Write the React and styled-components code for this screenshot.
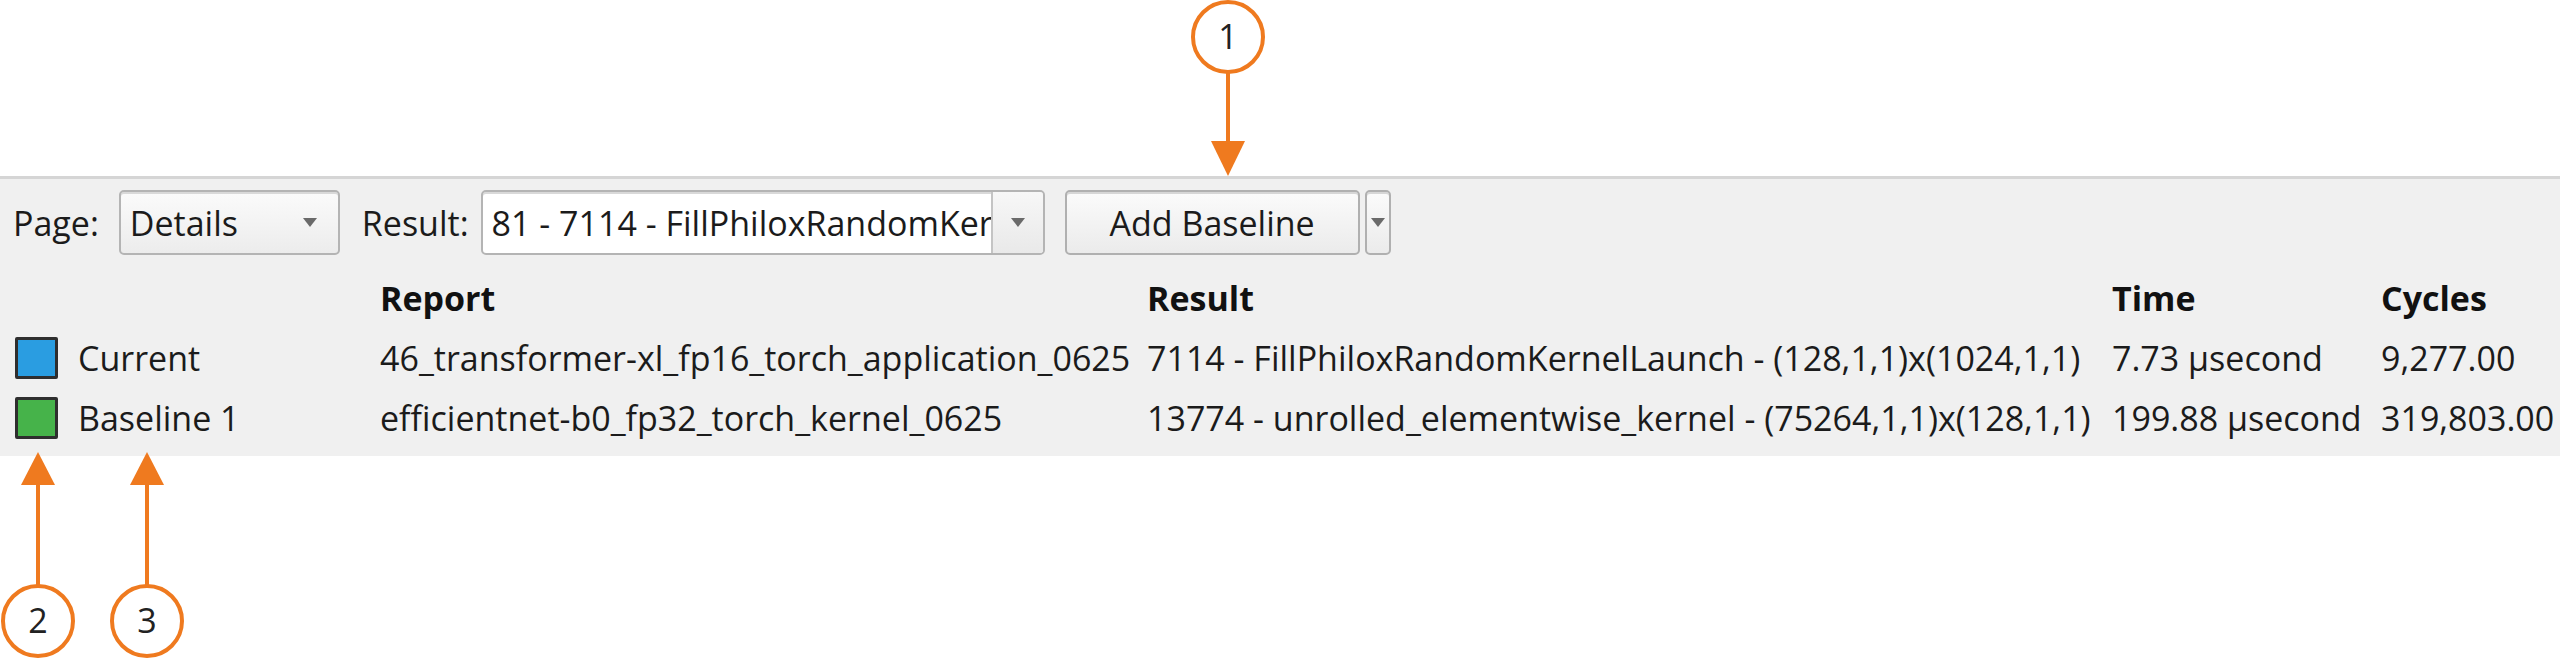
import React from "react";
import styled, { createGlobalStyle } from "styled-components";

const Global = createGlobalStyle`
  html, body { margin: 0; padding: 0; background: #ffffff; }
  body { font-family: "Open Sans", "Noto Sans", sans-serif; color: #1b1b1b; }
`;

const Page = styled.div`
  position: relative;
  width: 2560px;
  height: 668px;
  overflow: hidden;
  background: #ffffff;
`;

const TopSpace = styled.div`
  height: 176px;
`;

const Panel = styled.section`
  box-sizing: border-box;
  height: 280px;
  background: #f0f0f0;
  border-top: 3px solid #d5d5d5;
`;

const Toolbar = styled.div`
  display: flex;
  align-items: center;
  height: 65px;
  margin-top: 11px;
  padding-left: 13px;
  font-size: 34px;
`;

const Label = styled.span`
  margin-right: ${(p) => p.$gap}px;
  white-space: nowrap;
`;

const Combo = styled.div`
  display: flex;
  align-items: stretch;
  box-sizing: border-box;
  flex: none;
  width: ${(p) => p.$w}px;
  height: 65px;
  margin-right: ${(p) => p.$gap}px;
  border: 2px solid #b4b4b4;
  border-radius: 5px;
  background: ${(p) => (p.$editable ? "#ffffff" : "linear-gradient(#fbfbfb, #ececec)")};
  box-shadow: inset 0 2px 0 #d9d9d9;
  overflow: hidden;
`;

const ComboText = styled.span`
  flex: 1;
  min-width: 0;
  display: flex;
  align-items: center;
  padding-left: 9px;
  white-space: nowrap;
  overflow: hidden;
`;

const ComboArrow = styled.span`
  flex: none;
  display: flex;
  align-items: center;
  justify-content: center;
  width: ${(p) => p.$w}px;
  background: ${(p) => (p.$split ? "linear-gradient(#f7f7f7, #e9e9e9)" : "transparent")};
  border-left: ${(p) => (p.$split ? "2px solid #c4c4c4" : "none")};
`;

const Caret = styled.span`
  width: 0;
  height: 0;
  border-left: 7px solid transparent;
  border-right: 7px solid transparent;
  border-top: 9px solid #6a6a6a;
`;

const Button = styled.button`
  box-sizing: border-box;
  flex: none;
  width: ${(p) => p.$w}px;
  height: 65px;
  margin-right: ${(p) => p.$gap || 0}px;
  padding: 0;
  display: flex;
  align-items: center;
  justify-content: center;
  border: 2px solid #b0b0b0;
  border-radius: 5px;
  background: linear-gradient(#fbfbfb, #ebebeb);
  box-shadow: inset 0 2px 0 #d6d6d6;
  font-family: inherit;
  font-size: 34px;
  color: #1b1b1b;
`;

const Table = styled.div`
  display: grid;
  grid-template-columns: 63px 302px 767px 965px 269px auto;
  grid-auto-rows: 60px;
  margin-top: 13px;
  padding-left: 15px;
  font-size: 34px;
`;

const Cell = styled.div`
  display: flex;
  align-items: center;
  white-space: nowrap;
  font-weight: ${(p) => (p.$head ? 700 : 400)};
  color: ${(p) => (p.$head ? "#111" : "#1b1b1b")};
`;

const Swatch = styled.span`
  box-sizing: border-box;
  width: 43px;
  height: 42px;
  background: ${(p) => p.$color};
  border: 3px solid #2e2e2e;
  border-radius: 2px;
`;

const Overlay = styled.svg`
  position: absolute;
  left: 0;
  top: 0;
  pointer-events: none;
`;

const ORANGE = "#ef7a1f";

const Callout = ({ cx, cy, n, dir, tip }) => {
  const r = 35;
  const lineStart = dir === "down" ? cy + r : cy - r;
  const headBase = dir === "down" ? tip - 35 : tip + 33;
  return (
    <g>
      <circle cx={cx} cy={cy} r={r} fill="#fff" stroke={ORANGE} strokeWidth="4" />
      <text
        x={cx}
        y={cy + 12}
        textAnchor="middle"
        fontFamily="Open Sans, sans-serif"
        fontSize="34"
        fill="#222"
      >
        {n}
      </text>
      <line x1={cx} y1={lineStart} x2={cx} y2={headBase} stroke={ORANGE} strokeWidth="4" />
      <polygon
        points={`${cx - 17},${headBase} ${cx + 17},${headBase} ${cx},${tip}`}
        fill={ORANGE}
      />
    </g>
  );
};

const rows = [
  {
    color: "#2a9de1",
    name: "Current",
    report: "46_transformer-xl_fp16_torch_application_0625",
    result: "7114 - FillPhiloxRandomKernelLaunch - (128,1,1)x(1024,1,1)",
    time: "7.73 µsecond",
    cycles: "9,277.00",
  },
  {
    color: "#46b34a",
    name: "Baseline 1",
    report: "efficientnet-b0_fp32_torch_kernel_0625",
    result: "13774 - unrolled_elementwise_kernel - (75264,1,1)x(128,1,1)",
    time: "199.88 µsecond",
    cycles: "319,803.00",
  },
];

export default function App() {
  return (
    <Page>
      <Global />
      <TopSpace />
      <Panel>
        <Toolbar>
          <Label $gap={20}>Page:</Label>
          <Combo $w={221} $gap={22}>
            <ComboText>Details</ComboText>
            <ComboArrow $w={56}>
              <Caret />
            </ComboArrow>
          </Combo>
          <Label $gap={12}>Result:</Label>
          <Combo $w={564} $gap={20} $editable>
            <ComboText>81 - 7114 - FillPhiloxRandomKernelLaunch - (128,1,1)x(1024,1,1)</ComboText>
            <ComboArrow $w={50} $split>
              <Caret />
            </ComboArrow>
          </Combo>
          <Button $w={295} $gap={5}>Add Baseline</Button>
          <Button $w={26}>
            <Caret />
          </Button>
        </Toolbar>
        <Table>
          <Cell />
          <Cell />
          <Cell $head>Report</Cell>
          <Cell $head>Result</Cell>
          <Cell $head>Time</Cell>
          <Cell $head>Cycles</Cell>
          {rows.map((r) => (
            <React.Fragment key={r.name}>
              <Cell>
                <Swatch $color={r.color} />
              </Cell>
              <Cell>{r.name}</Cell>
              <Cell>{r.report}</Cell>
              <Cell>{r.result}</Cell>
              <Cell>{r.time}</Cell>
              <Cell>{r.cycles}</Cell>
            </React.Fragment>
          ))}
        </Table>
      </Panel>
      <Overlay width="2560" height="668" viewBox="0 0 2560 668">
        <Callout cx={1228} cy={37} n="1" dir="down" tip={176} />
        <Callout cx={38} cy={621} n="2" dir="up" tip={452} />
        <Callout cx={147} cy={621} n="3" dir="up" tip={452} />
      </Overlay>
    </Page>
  );
}
